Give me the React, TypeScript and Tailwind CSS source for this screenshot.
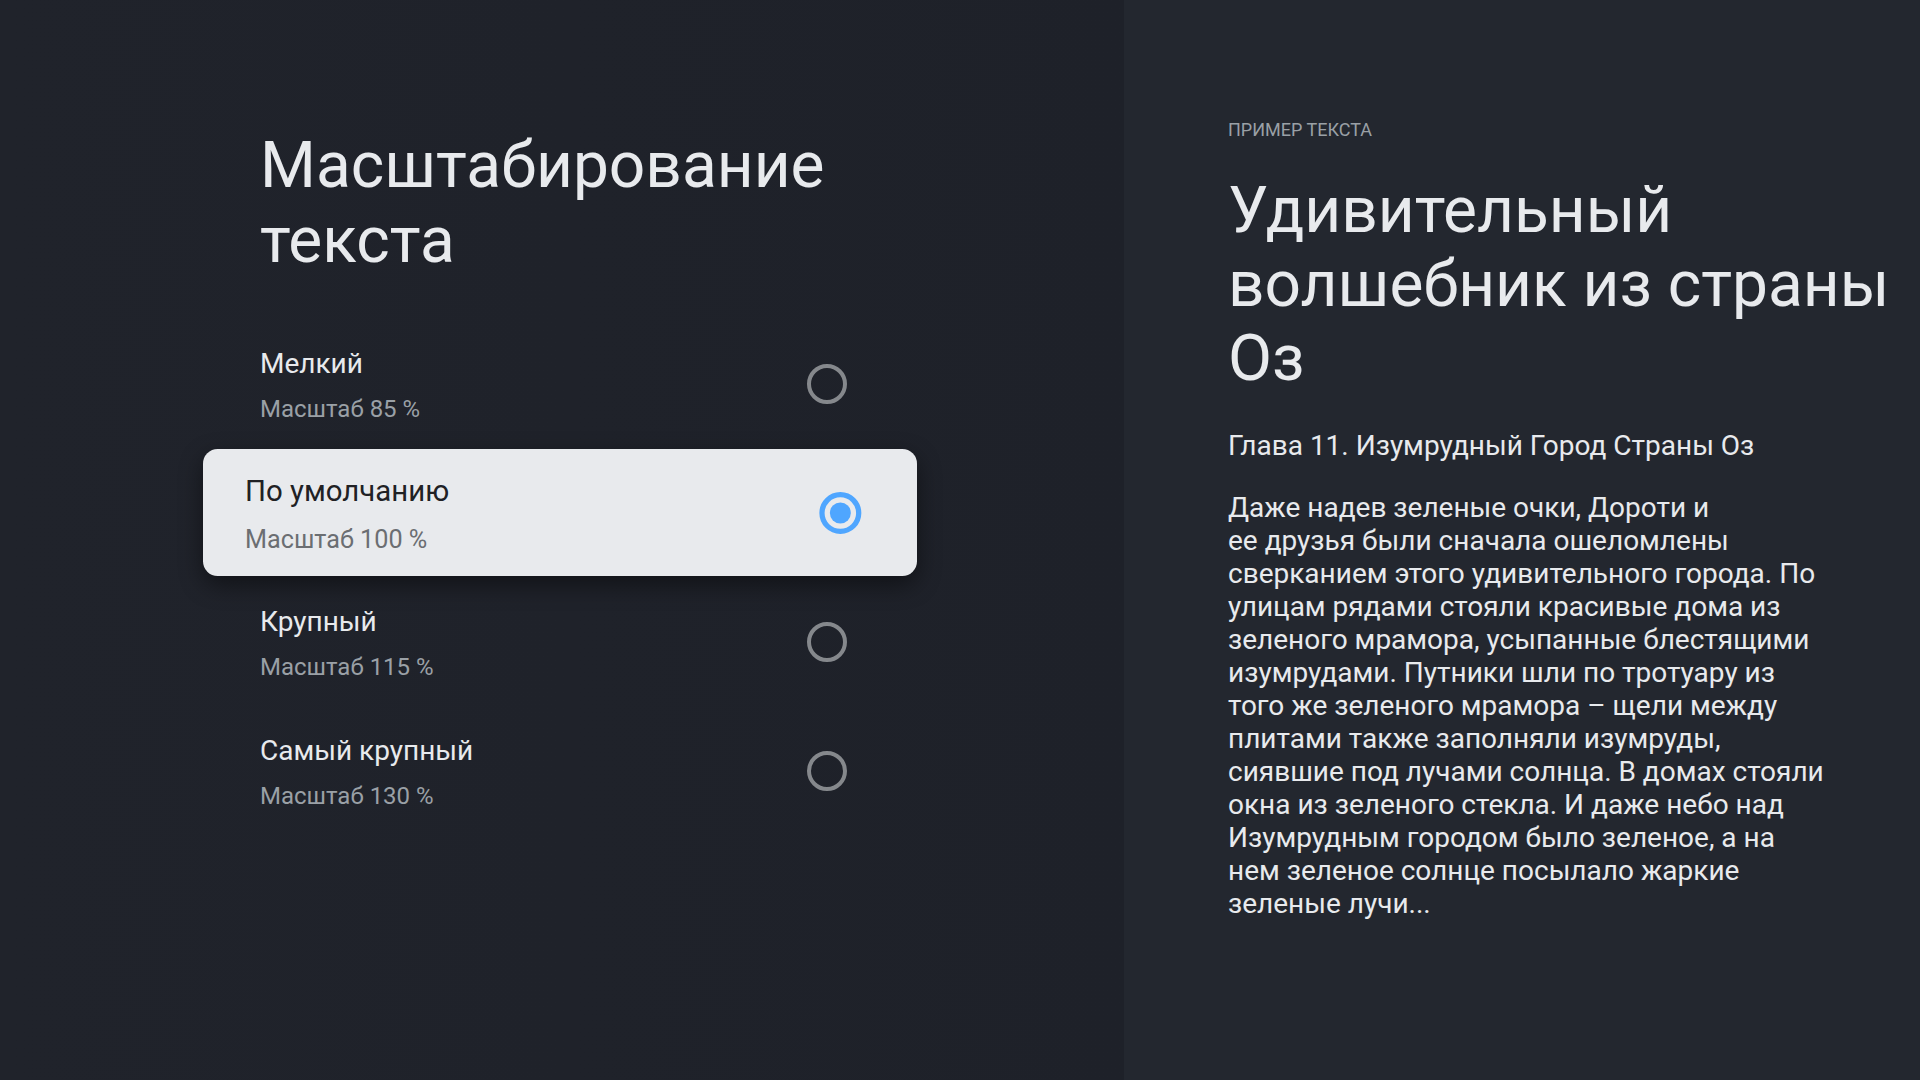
const options = [
  { title: "Мелкий", scale: "Масштаб 85 %" },
  { title: "По умолчанию", scale: "Масштаб 100 %" },
  { title: "Крупный", scale: "Масштаб 115 %" },
  { title: "Самый крупный", scale: "Масштаб 130 %" },
];

const selected = 1;

const bodyLines = [
  "Даже надев зеленые очки, Дороти и",
  "ее друзья были сначала ошеломлены",
  "сверканием этого удивительного города. По",
  "улицам рядами стояли красивые дома из",
  "зеленого мрамора, усыпанные блестящими",
  "изумрудами. Путники шли по тротуару из",
  "того же зеленого мрамора – щели между",
  "плитами также заполняли изумруды,",
  "сиявшие под лучами солнца. В домах стояли",
  "окна из зеленого стекла. И даже небо над",
  "Изумрудным городом было зеленое, а на",
  "нем зеленое солнце посылало жаркие",
  "зеленые лучи...",
];

function Radio({ checked }: { checked: boolean }) {
  if (checked) {
    return (
      <div className="flex h-10 w-10 items-center justify-center rounded-full border-[5px] border-[#4fa6ff]">
        <div className="h-[20px] w-[20px] rounded-full bg-[#4fa6ff]" />
      </div>
    );
  }
  return <div className="h-10 w-10 rounded-full border-4 border-[#85888c]" />;
}

function OptionRow({ title, scale, active }: { title: string; scale: string; active: boolean }) {
  return (
    <div
      className={
        active
          ? "flex h-[121px] scale-[1.05] items-center justify-between rounded-[14px] bg-[#e8eaed] pl-[40px] pr-[53px] shadow-[0_8px_22px_rgba(0,0,0,0.45)]"
          : "flex h-[121px] items-center justify-between pl-[40px] pr-[53px]"
      }
    >
      <div className="flex flex-col pt-[3px]">
        <span className={active ? "text-[28px] leading-[36px] text-[#202124]" : "text-[28px] leading-[36px] text-[#e8eaed]"}>
          {title}
        </span>
        <span
          className={
            active
              ? "mt-[11px] text-[24px] leading-[32px] text-[#6b6e72]"
              : "mt-[11px] text-[24px] leading-[32px] text-[#9aa0a6]"
          }
        >
          {scale}
        </span>
      </div>
      <Radio checked={active} />
    </div>
  );
}

export default function App() {
  return (
    <div
      className="flex h-[1080px] w-[1920px] overflow-hidden"
      style={{ fontFamily: "Roboto, 'Noto Sans', 'Liberation Sans', sans-serif" }}
    >
      {/* settings list */}
      <div className="h-full w-[1124px] bg-gradient-to-r from-[#20232b] to-[#1e2129] pl-[220px] pt-[128px]">
        <h1 className="pl-[40px] text-[64px] leading-[75px] font-normal text-[#e8eaed]">
          Масштабирование
          <br />
          текста
        </h1>
        <div className="mt-[45px] flex w-[680px] flex-col gap-[8px]">
          {options.map((o, i) => (
            <OptionRow key={o.title} title={o.title} scale={o.scale} active={i === selected} />
          ))}
        </div>
      </div>

      {/* preview */}
      <div className="h-full flex-1 bg-[#23272f] pl-[104px] pt-[118px]">
        <div className="text-[18px] leading-[24px] uppercase text-[#9aa0a6]">Пример текста</div>
        <h2 className="mt-[32px] text-[64px] leading-[74px] font-normal text-[#e8eaed]">
          Удивительный
          <br />
          волшебник из страны
          <br />
          Оз
        </h2>
        <div className="mt-[33px] text-[28px] leading-[34px] text-[#e8eaed]">Глава 11. Изумрудный Город Страны Оз</div>
        <div className="mt-[28px] text-[28px] leading-[33px] text-[#e8eaed]">
          {bodyLines.map((l) => (
            <div key={l} className="whitespace-nowrap">
              {l}
            </div>
          ))}
        </div>
      </div>
    </div>
  );
}
